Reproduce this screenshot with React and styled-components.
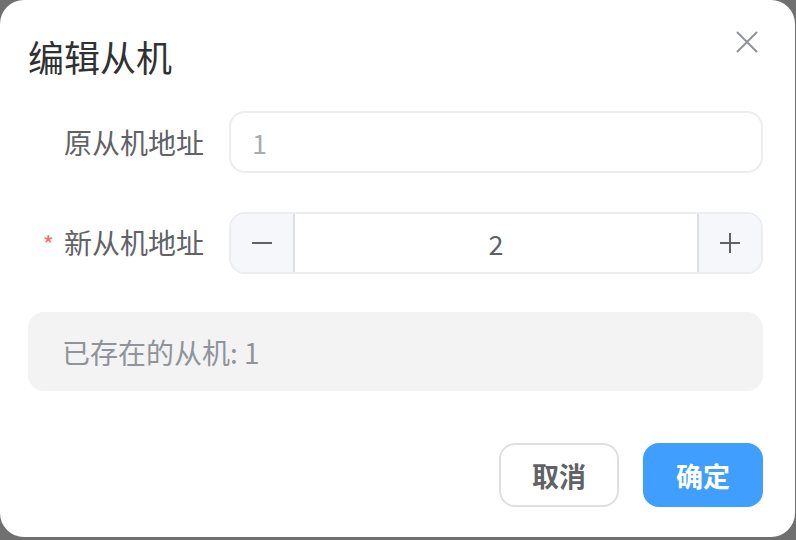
import React, { useState } from "react";
import styled, { createGlobalStyle } from "styled-components";

const GlobalStyle = createGlobalStyle`
  html, body {
    margin: 0;
    padding: 0;
    background: #707070;
  }
  body {
    font-family: "Noto Sans CJK SC", "Noto Sans", "Liberation Sans", sans-serif;
  }
`;

function Dialog() {
  const [value, setValue] = useState(2);

  return (
    <DialogStyled>
      <Header>
        <Title>编辑从机</Title>
        <CloseButton aria-label="close">
          <svg width="22" height="22" viewBox="0 0 22 22">
            <path d="M1.5 1.5 L20.5 20.5 M20.5 1.5 L1.5 20.5" stroke="#909399" strokeWidth="2" strokeLinecap="round" />
          </svg>
        </CloseButton>
      </Header>

      <Form>
        <FormRow>
          <Label>原从机地址</Label>
          <TextInput disabled value="1" readOnly />
        </FormRow>

        <FormRow>
          <Label required>新从机地址</Label>
          <NumberBox>
            <StepButton side="left" onClick={() => setValue(value - 1)}>
              <svg width="22" height="22" viewBox="0 0 22 22">
                <path d="M1 11 H21" stroke="#606266" strokeWidth="2" />
              </svg>
            </StepButton>
            <NumberField value={value} readOnly />
            <StepButton side="right" onClick={() => setValue(value + 1)}>
              <svg width="22" height="22" viewBox="0 0 22 22">
                <path d="M1 11 H21 M11 1 V21" stroke="#606266" strokeWidth="2" />
              </svg>
            </StepButton>
          </NumberBox>
        </FormRow>

        <InfoBox>已存在的从机: 1</InfoBox>
      </Form>

      <Footer>
        <Button>取消</Button>
        <Button primary>确定</Button>
      </Footer>
    </DialogStyled>
  );
}

export default function App() {
  return (
    <>
      <GlobalStyle />
      <Page>
        <Dialog />
      </Page>
    </>
  );
}

const Page = styled.div`
  width: 796px;
  height: 540px;
  overflow: hidden;
  background: #707070;
`;

const DialogStyled = styled.div`
  position: relative;
  width: 795px;
  height: 537px;
  box-sizing: border-box;
  background: #ffffff;
  border-radius: 24px;
  padding: 31px 32px 0 28px;
  display: flex;
  flex-direction: column;
`;

const Header = styled.div`
  display: flex;
  align-items: center;
`;

const Title = styled.h2`
  margin: 0;
  font-size: 36px;
  line-height: 50px;
  font-weight: 400;
  color: #303133;
`;

const CloseButton = styled.button`
  position: absolute;
  top: 31px;
  right: 37px;
  width: 22px;
  height: 22px;
  padding: 0;
  border: none;
  background: transparent;
  cursor: pointer;
  display: flex;
`;

const Form = styled.div`
  margin-top: 30px;
  display: flex;
  flex-direction: column;
  gap: 38px;
`;

const FormRow = styled.div`
  display: grid;
  grid-template-columns: 201px 1fr;
  align-items: center;
`;

const Label = styled.label`
  text-align: right;
  padding-right: 25px;
  font-size: 28px;
  color: #606266;
  line-height: 62px;
  white-space: nowrap;

  &::before {
    content: ${(p) => (p.required ? '"*"' : "none")};
    color: #f56c6c;
    margin-right: 10px;
    font-size: 24px;
  }
`;

const TextInput = styled.input`
  height: 62px;
  box-sizing: border-box;
  border: 2px solid #ebedf1;
  border-radius: 16px;
  background: #ffffff;
  padding: 0 21px;
  font-family: inherit;
  font-size: 27px;
  color: #a8abb2;
  outline: none;
`;

const NumberBox = styled.div`
  height: 62px;
  box-sizing: border-box;
  border: 2px solid #ebedf1;
  border-radius: 16px;
  overflow: hidden;
  display: grid;
  grid-template-columns: 64px 1fr 64px;
`;

const StepButton = styled.button`
  border: none;
  background: #f5f7fa;
  display: flex;
  align-items: center;
  justify-content: center;
  cursor: pointer;
  padding: 0;
  border-${(p) => (p.side === "left" ? "right" : "left")}: 2px solid #dcdfe6;
`;

const NumberField = styled.input`
  border: none;
  outline: none;
  min-width: 0;
  text-align: center;
  font-family: inherit;
  font-size: 27px;
  color: #606266;
  background: #ffffff;
`;

const InfoBox = styled.div`
  margin-top: -1px;
  height: 79px;
  border-radius: 16px;
  background: #f3f3f4;
  display: flex;
  align-items: center;
  padding: 0 34px;
  font-size: 28px;
  color: #909399;
`;

const Footer = styled.div`
  margin-top: 52px;
  display: flex;
  justify-content: flex-end;
  gap: 24px;
`;

const Button = styled.button`
  width: 120px;
  height: 64px;
  box-sizing: border-box;
  border-radius: 16px;
  font-family: inherit;
  font-size: 27px;
  font-weight: 600;
  cursor: pointer;
  border: 2px solid ${(p) => (p.primary ? "#409eff" : "#dcdfe6")};
  background: ${(p) => (p.primary ? "#409eff" : "#ffffff")};
  color: ${(p) => (p.primary ? "#ffffff" : "#606266")};
`;
